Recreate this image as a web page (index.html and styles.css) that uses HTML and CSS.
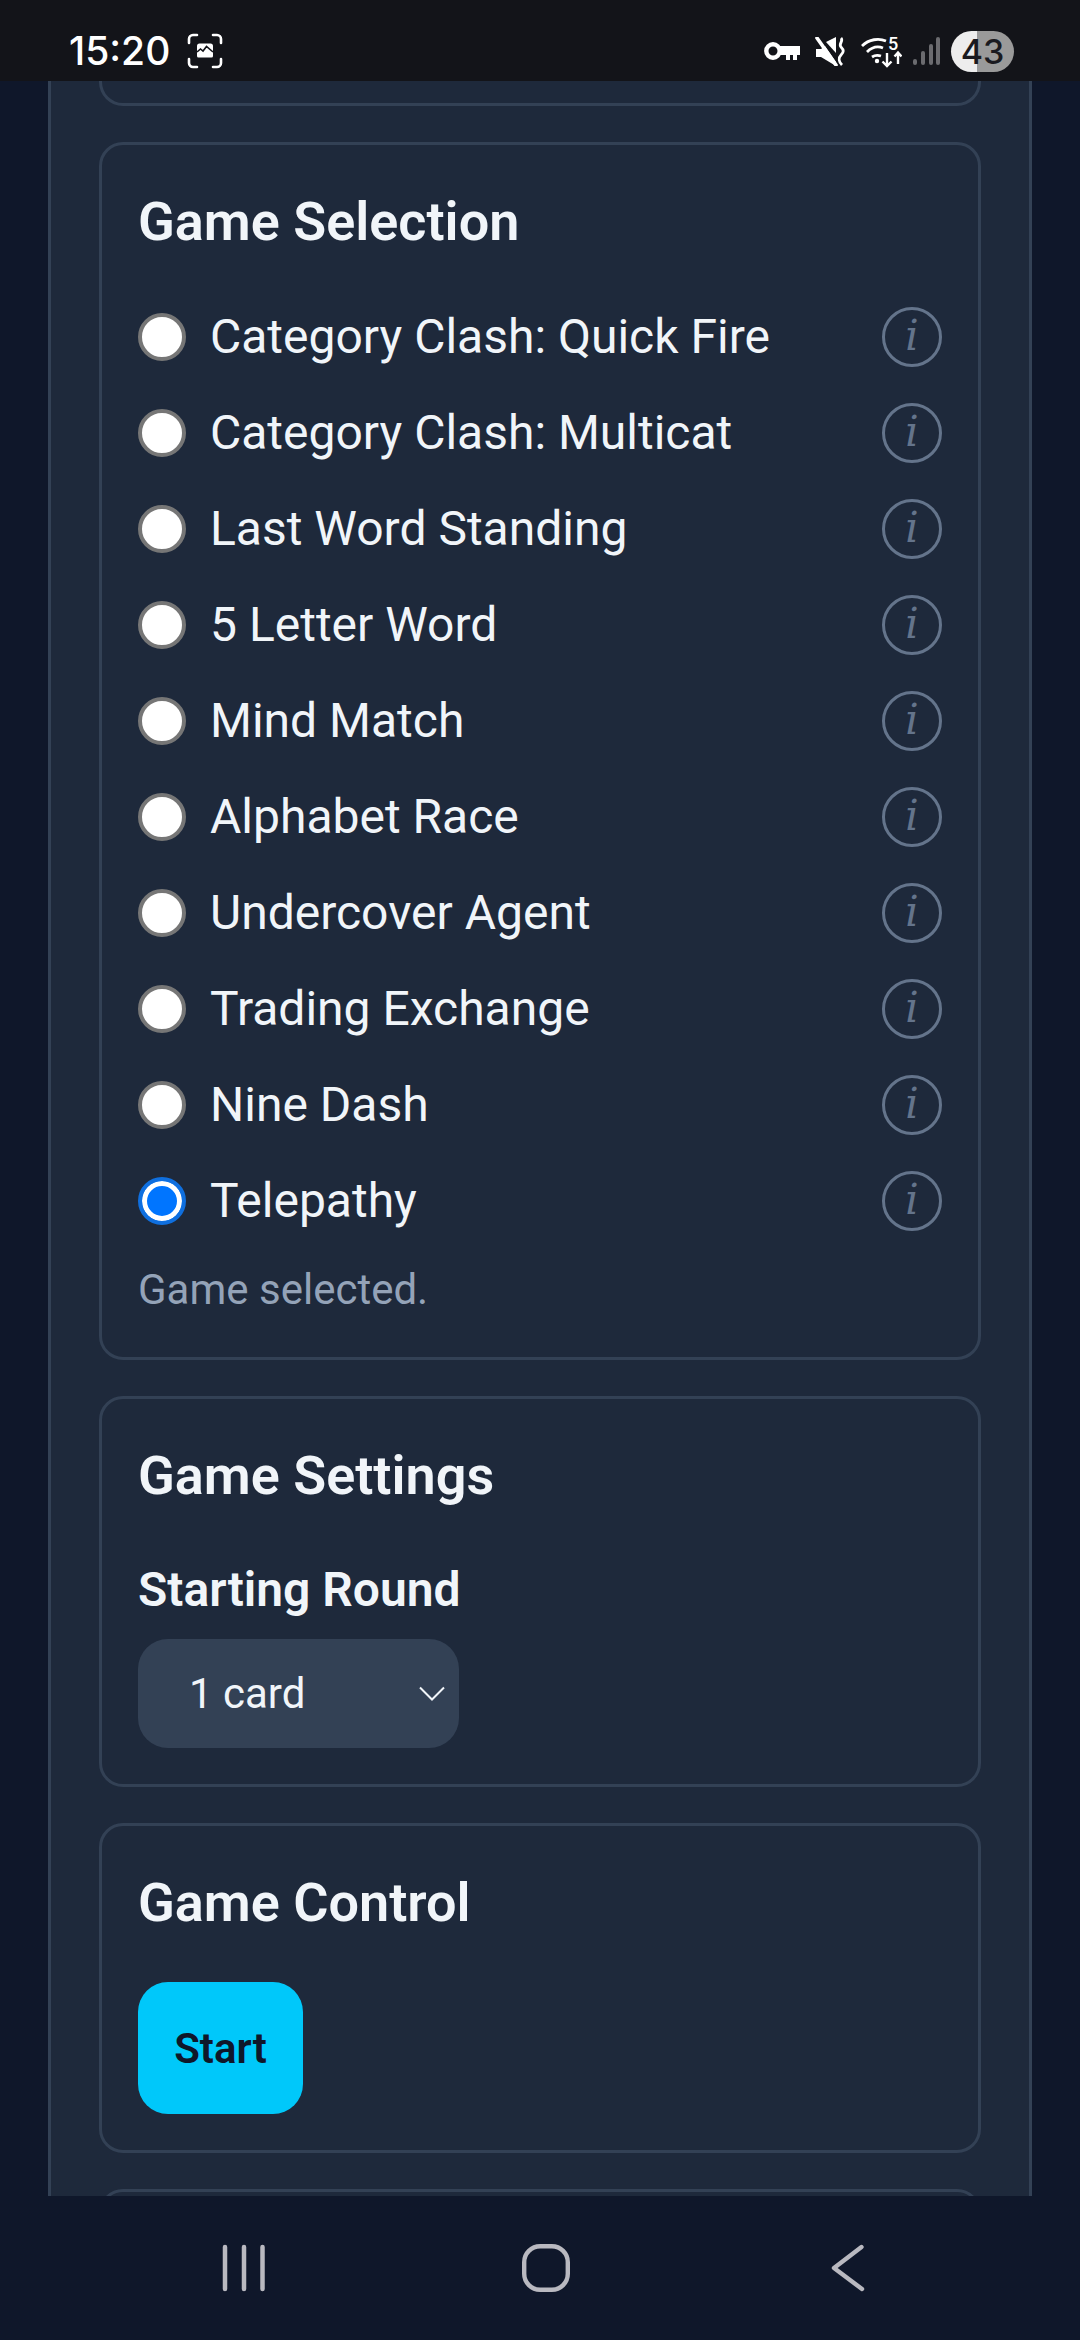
FILE: index.html
```html
<!DOCTYPE html>
<html lang="en">
<head>
  <meta charset="UTF-8" />
  <title>Game Host</title>
  <meta name="viewport" content="width=device-width, initial-scale=1.0" />
  <link rel="stylesheet" href="styles.css">
</head>
<body>

  <!-- Android status bar -->
  <div class="status-bar">
    <div class="status-left">
      <span class="clock">15:20</span>
      <svg class="shot-icon" width="36" height="36" viewBox="0 0 36 36">
        <path d="M2 10V6a4 4 0 0 1 4-4h4M26 2h4a4 4 0 0 1 4 4v4M34 26v4a4 4 0 0 1-4 4h-4M10 34H6a4 4 0 0 1-4-4v-4" fill="none" stroke="#fff" stroke-width="2.6" stroke-linecap="round"/>
        <path d="M10 13a2.500 2.500 0 0 1 2.500-2.500h11A2.500 2.500 0 0 1 26 13v10a1.500 1.500 0 0 1-1.500 1.500h-13A1.500 1.500 0 0 1 10 23z" fill="#fff"/>
        <path d="M10 19l3.500-3 2.500 2 3.500-4.500 6.500 5.500" fill="none" stroke="#131419" stroke-width="1.600"/>
      </svg>
    </div>
    <div class="status-right">
      <svg class="key-icon" width="37" height="18" viewBox="0 0 37 18">
        <circle cx="9" cy="9" r="6.700" fill="none" stroke="#fff" stroke-width="4.400"/>
        <path d="M15 4h21v9h-3v5H22v-5h-7z" fill="#fff"/>
        <path d="M26 13h3v5h-3z" fill="#131419"/>
      </svg>
      <svg class="mute-icon" width="30" height="29" viewBox="0 0 30 29">
        <path d="M1 12h5l4-3 11 16v4L6 20H1z" fill="#fff"/>
        <path d="M11 5l10-5v16z" fill="#fff"/>
        <path d="M2 1l19 27" stroke="#fff" stroke-width="3.600" stroke-linecap="round"/>
        <path d="M26 1c3 3-3 6 0 9s3 5 0 8-2 7 1 10" fill="none" stroke="#fff" stroke-width="2.800"/>
      </svg>
      <svg class="wifi-icon" width="42" height="36" viewBox="0 -3 42 36">
        <path d="M2 10C9 3 19 2 26 5M7 16c5-5 11-6 16-4M12 21c3-2 6-2 9-1" fill="none" stroke="#fff" stroke-width="2.800"/>
        <circle cx="17" cy="25" r="2.200" fill="#fff"/>
        <text x="28" y="14" class="wifi-num">5</text>
        <path d="M27 17v13M22.500 25.500l4.500 4.500 4.500-4.500M38 28V17M34.500 20.500l3.500-4 3.500 4" fill="none" stroke="#fff" stroke-width="2.400"/>
      </svg>
      <svg class="signal" width="28" height="30" viewBox="0 0 28 30">
        <g fill="#6b6b6f">
          <rect x="1" y="23" width="4" height="6" rx="2"/>
          <rect x="9" y="15" width="4" height="14" rx="2"/>
          <rect x="17" y="8" width="4" height="21" rx="2"/>
          <rect x="24" y="1" width="4" height="28" rx="2"/>
        </g>
      </svg>
      <span class="battery">43</span>
    </div>
  </div>

  <main class="viewport">
    <div class="panel">

      <section class="card card-scrolled"></section>

      <section class="card">
        <h3>Game Selection</h3>
        <div class="game-list">
          <label class="game-row"><input type="radio" name="game" /><span class="game-name">Category Clash: Quick Fire</span><span class="info">i</span></label>
          <label class="game-row"><input type="radio" name="game" /><span class="game-name">Category Clash: Multicat</span><span class="info">i</span></label>
          <label class="game-row"><input type="radio" name="game" /><span class="game-name">Last Word Standing</span><span class="info">i</span></label>
          <label class="game-row"><input type="radio" name="game" /><span class="game-name">5 Letter Word</span><span class="info">i</span></label>
          <label class="game-row"><input type="radio" name="game" /><span class="game-name">Mind Match</span><span class="info">i</span></label>
          <label class="game-row"><input type="radio" name="game" /><span class="game-name">Alphabet Race</span><span class="info">i</span></label>
          <label class="game-row"><input type="radio" name="game" /><span class="game-name">Undercover Agent</span><span class="info">i</span></label>
          <label class="game-row"><input type="radio" name="game" /><span class="game-name">Trading Exchange</span><span class="info">i</span></label>
          <label class="game-row"><input type="radio" name="game" /><span class="game-name">Nine Dash</span><span class="info">i</span></label>
          <label class="game-row"><input type="radio" name="game" checked /><span class="game-name">Telepathy</span><span class="info">i</span></label>
        </div>
        <p class="hint">Game selected.</p>
      </section>

      <section class="card">
        <h3>Game Settings</h3>
        <div class="field-label">Starting Round</div>
        <div class="select">
          <span>1 card</span>
          <svg width="26" height="16" viewBox="0 0 26 16">
            <path d="M1 1.500l12 12 12-12" fill="none" stroke="#f1f5f9" stroke-width="2"/>
          </svg>
        </div>
      </section>

      <section class="card">
        <h3>Game Control</h3>
        <button class="start-btn">Start</button>
      </section>

      <section class="card card-next"></section>

    </div>
  </main>

  <!-- Android nav bar -->
  <nav class="nav-bar">
    <svg class="nav-recents" width="46" height="48" viewBox="0 0 46 48">
      <g stroke="#b9b9c0" stroke-width="4.500" stroke-linecap="round">
        <path d="M3 3v42M22 3v42M40.500 3v42"/>
      </g>
    </svg>
    <svg class="nav-home" width="48" height="48" viewBox="0 0 48 48">
      <rect x="2.200" y="2.200" width="43.600" height="43.600" rx="16" fill="none" stroke="#b9b9c0" stroke-width="4.400"/>
    </svg>
    <svg class="nav-back" width="34" height="48" viewBox="0 0 34 48">
      <path d="M30.500 3L3 24l28 21" fill="none" stroke="#b9b9c0" stroke-width="4.400" stroke-linecap="round" stroke-linejoin="round"/>
    </svg>
  </nav>

</body>
</html>
```

FILE: styles.css
```css
body {
  margin: 0;
  width: 1080px;
  height: 2340px;
  overflow: hidden;
  display: flex;
  flex-direction: column;
  font-family: Roboto, sans-serif;
  background-color: #0f172a;
  color: #f1f5f9;
}

.status-bar {
  flex: 0 0 81px;
  box-sizing: border-box;
  background: #131419;
  padding: 0 66px 0 69px;
  display: flex;
  align-items: center;
  justify-content: space-between;
  color: #fff;
}

.status-left {
  display: flex;
  align-items: center;
  gap: 17px;
  margin-top: 21px;
}

.clock {
  font-family: Inter, Roboto, sans-serif;
  font-size: 39px;
  font-weight: 500;
  line-height: 40px;
}

.status-right {
  display: flex;
  align-items: center;
  margin-top: 21px;
}

.mute-icon {
  margin-left: 14px;
}

.wifi-icon {
  margin-left: 15px;
}

.signal {
  margin-left: 10px;
}

.battery {
  margin-left: 11px;
  width: 63px;
  height: 41px;
  border-radius: 21px;
  background: linear-gradient(90deg, #ededed 0 26px, #9a9a9a 26px);
  color: #1a1a20;
  font-family: Inter, Roboto, sans-serif;
  font-size: 34px;
  font-weight: 500;
  line-height: 41px;
  text-align: center;
}

.wifi-num {
  font-family: Roboto, sans-serif;
  font-size: 18px;
  font-weight: 500;
  fill: #fff;
}

.viewport {
  flex: 0 0 2115px;
  overflow: hidden;
  padding: 0 48px;
}

.panel {
  background: #1e293b;
  border: solid #334155;
  border-width: 0 3px;
  padding: 0 48px;
  display: flex;
  flex-direction: column;
  gap: 36px;
}

.card {
  border: 3px solid #334155;
  border-radius: 24px;
  padding: 36px;
  flex: none;
}

.card-scrolled {
  height: 22px;
  padding: 0;
  border-top: none;
  border-radius: 0 0 24px 24px;
}

.card-next {
  height: 200px;
}

h3 {
  margin: 0 0 27px;
  font-size: 54px;
  font-weight: 600;
  line-height: 81px;
}

.game-row {
  display: flex;
  align-items: center;
  height: 96px;
}

.game-row input {
  appearance: none;
  box-sizing: border-box;
  flex: none;
  width: 48px;
  height: 48px;
  margin: 0 24px 0 0;
  border: 4px solid #767676;
  border-radius: 50%;
  background: #fff;
}

.game-row input:checked {
  border-color: #0f6fdf;
  background: #0075ff;
  box-shadow: inset 0 0 0 5px #fff;
}

.game-name {
  flex: 1;
  font-size: 48px;
  line-height: 72px;
}

.info {
  flex: none;
  box-sizing: border-box;
  width: 60px;
  height: 60px;
  border: 3px solid #64748b;
  border-radius: 50%;
  color: #64748b;
  font-family: "DejaVu Serif", serif;
  font-style: italic;
  font-size: 42px;
  line-height: 52px;
  text-align: center;
}

.hint {
  margin: 9px 0 0;
  font-size: 42px;
  line-height: 63px;
  color: #94a3b8;
}

.field-label {
  margin: 38px 0 13px;
  font-size: 48px;
  font-weight: 600;
  line-height: 72px;
}

.select {
  box-sizing: border-box;
  width: 321px;
  height: 109px;
  padding: 0 14px 0 51px;
  border-radius: 30px;
  background: #334155;
  display: flex;
  align-items: center;
  justify-content: space-between;
  font-size: 42px;
}

.start-btn {
  display: block;
  width: 165px;
  height: 132px;
  margin-top: 39px;
  padding: 0;
  border: none;
  border-radius: 30px;
  background: #00c8fa;
  color: #0f172a;
  font-family: Roboto, sans-serif;
  font-size: 42px;
  font-weight: 600;
}

.nav-bar {
  flex: 1;
  box-sizing: border-box;
  background: #0f172a;
  padding: 48px 0 0 222px;
  display: flex;
  align-items: flex-start;
}

.nav-home {
  margin-left: 254px;
}

.nav-back {
  margin-left: 261px;
}
```
